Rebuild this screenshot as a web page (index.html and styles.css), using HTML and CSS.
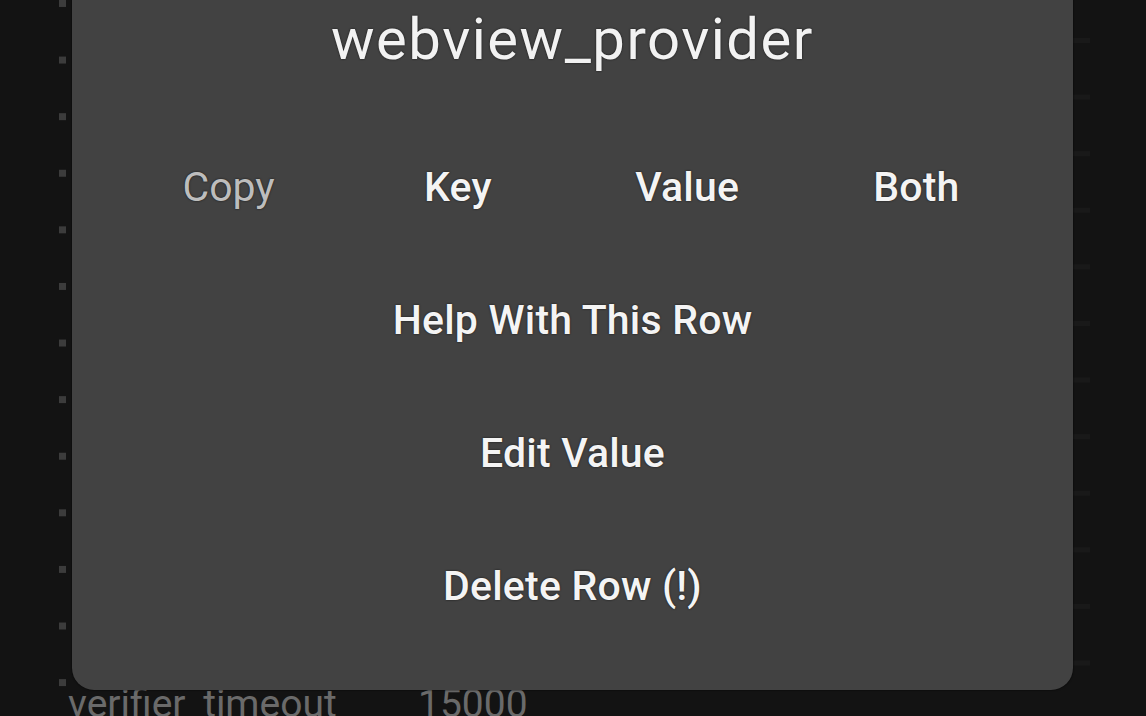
FILE: index.html
```html
<!DOCTYPE html>
<html lang="en">
<head>
<meta charset="utf-8">
<title>webview_provider</title>
<link rel="stylesheet" href="styles.css">
</head>
<body>
<div class="screen">
  <div class="rail-left"></div>
  <div class="list">
    <div class="row">
      <span class="key">verifier_timeout</span>
      <span class="val">15000</span>
    </div>
  </div>
  <div class="rail-right"></div>

  <div class="dialog">
    <h1 class="title">webview_provider</h1>
    <div class="copy-row">
      <span class="copy-label">Copy</span>
      <button class="btn">Key</button>
      <button class="btn">Value</button>
      <button class="btn">Both</button>
    </div>
    <button class="btn action">Help With This Row</button>
    <button class="btn action">Edit Value</button>
    <button class="btn action">Delete Row (!)</button>
  </div>
</div>
</body>
</html>
```
FILE: styles.css
```css
html, body {
  margin: 0;
  padding: 0;
  background: #131313;
  overflow: hidden;
}

.screen {
  position: relative;
  width: 1146px;
  height: 716px;
  display: flex;
  font-family: Roboto, "Noto Sans", sans-serif;
}

.rail-left {
  width: 7px;
  margin-left: 59px;
  background-image: linear-gradient(to bottom, #3c3c3c 0 7px, transparent 7px);
  background-size: 7px 56.6px;
  background-repeat: repeat-y;
  background-position: 0 0;
}

.list {
  flex: 1;
  display: flex;
  flex-direction: column;
  justify-content: flex-end;
}

.row {
  display: flex;
  align-items: baseline;
  margin-left: 2px;
  margin-bottom: -8px;
  color: #6a6a6a;
  font-size: 39px;
  line-height: 40px;
}

.key {
  width: 350px;
}

.rail-right {
  width: 18px;
  margin-right: 56px;
  background-image: linear-gradient(to bottom, #191919 0 5px, transparent 5px);
  background-size: 18px 56.6px;
  background-repeat: repeat-y;
  background-position: 0 38px;
}

.dialog {
  position: absolute;
  left: 72px;
  top: -40px;
  width: 1001px;
  height: 730px;
  box-sizing: border-box;
  background: #424242;
  border-radius: 22px;
  box-shadow: 0 0 2px #000;
  padding: 50px 42px 0;
  display: flex;
  flex-direction: column;
  align-items: stretch;
}

.title {
  margin: 0;
  font-weight: 400;
  font-size: 58px;
  line-height: 58px;
  color: #f2f2f2;
  text-align: center;
  letter-spacing: 1.5px;
  text-shadow: 0 0 2px #111;
}

.copy-row {
  margin-top: 52px;
  height: 133px;
  display: grid;
  grid-template-columns: repeat(4, 1fr);
  align-items: center;
  justify-items: center;
}

.copy-label {
  font-size: 41px;
  line-height: 40px;
  color: #bdbdbd;
  text-shadow: 0 0 2px #111;
}

.btn {
  border: 0;
  background: none;
  padding: 0;
  margin: 0;
  font-family: Roboto, "Noto Sans", sans-serif;
  font-weight: 500;
  font-size: 41px;
  line-height: 40px;
  letter-spacing: 0.2px;
  color: #f4f4f4;
  text-shadow: 0 0 2px #111;
}

.action {
  height: 133px;
  align-self: center;
}
```
